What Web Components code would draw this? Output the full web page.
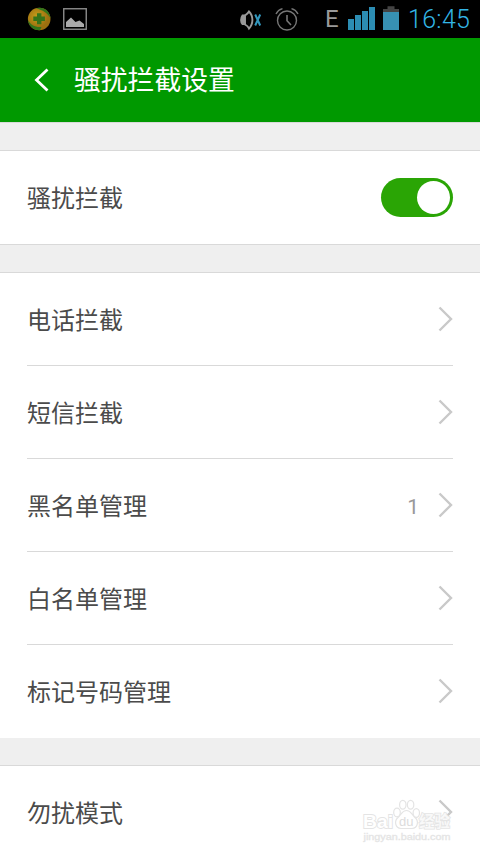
<!DOCTYPE html>
<html lang="zh-CN">
<head>
<meta charset="UTF-8">
<meta name="viewport" content="width=device-width, initial-scale=1.0">
<title>骚扰拦截设置</title>
<style>
  body {
    margin: 0;
    height: 854px;
    overflow: hidden;
    position: relative;
    background: #efefef;
    font-family: Roboto, "Noto Sans CJK SC", sans-serif;
    color: #4b4b4b;
  }
</style>
</head>
<body>
  <status-bar time="16:45" network="E"></status-bar>
  <title-bar>骚扰拦截设置</title-bar>
  <settings-group>
    <settings-row>骚扰拦截<toggle-switch slot="end"></toggle-switch></settings-row>
  </settings-group>
  <settings-group open>
    <settings-row arrow divider>电话拦截</settings-row>
    <settings-row arrow divider>短信拦截</settings-row>
    <settings-row arrow divider>黑名单管理<span slot="end">1</span></settings-row>
    <settings-row arrow divider>白名单管理</settings-row>
    <settings-row arrow>标记号码管理</settings-row>
  </settings-group>
  <settings-group open>
    <settings-row arrow>勿扰模式</settings-row>
  </settings-group>
  <page-watermark></page-watermark>

<script>
class StatusBar extends HTMLElement {
  constructor() {
    super();
    this.attachShadow({ mode: 'open' });
    this.shadowRoot.innerHTML = `
      <style>
        :host {
          display: flex;
          align-items: center;
          box-sizing: border-box;
          height: 38px;
          padding: 0 10px 0 27px;
          background: #000;
        }
        svg { display: block; flex: none; }
        .image { margin-left: 11px; }
        .mute { margin-left: auto; }
        .alarm { margin-left: 12px; }
        .network {
          margin-left: 26px;
          width: 17px;
          font-size: 24px;
          line-height: 38px;
          color: #999;
        }
        .signal { margin-left: 6px; }
        .battery { margin-left: 8px; }
        .time {
          margin-left: 9px;
          width: 62px;
          padding-top: 2px;
          font-size: 25px;
          font-weight: 300;
          line-height: 36px;
          letter-spacing: .3px;
          text-align: right;
          white-space: nowrap;
          color: #33b5e5;
        }
      </style>
      <svg width="25" height="38" viewBox="0 0 25 38">
        <defs>
          <radialGradient id="ball" cx="40%" cy="38%">
            <stop offset="0" stop-color="#c79d1a"/>
            <stop offset="1" stop-color="#9c7010"/>
          </radialGradient>
        </defs>
        <circle cx="12.2" cy="19" r="11.3" fill="url(#ball)"/>
        <path d="M9 8.300c7-2.300 14 2 14.500 10-3-5.500-7.500-8-14.500-10z" fill="#32751b"/>
        <path d="M1 20c2.500 5 7 7.500 13.500 7l-1.500 3.300C6 30.500 1.500 26 1 20z" fill="#32751b"/>
        <path d="M10 13.200h4.400v3.400h3.500V21h-3.500v3.200H10V21H6.300v-4.400H10z" fill="#367419"/>
      </svg>
      <svg class="image" width="24" height="38" viewBox="0 0 24 38">
        <rect x=".75" y="8.750" width="22.500" height="20.500" fill="none" stroke="#8c8c8c" stroke-width="1.400"/>
        <path d="M3 27v-5l5-4.500 4.500 4.500 4-1.500 4.500 3.500v3z" fill="#aaa"/>
      </svg>
      <svg class="mute" width="24" height="38" viewBox="0 0 24 38">
        <path d="M3 14.500h3.500v10.500H3Q-.8 20 3 14.500z" fill="#999"/>
        <path d="M6 15.500Q9 13.500 10 11.500q3.400 3.500 3.400 8.500T10 28.500Q9 26 6 24.500z" fill="none" stroke="#999" stroke-width="1.900"/>
        <path d="M16.200 14.500l5 11M21.200 14.500l-5 11" stroke="#3297bd" stroke-width="2"/>
      </svg>
      <svg class="alarm" width="24" height="38" viewBox="0 0 24 38" fill="none" stroke="#777" stroke-width="1.400">
        <circle cx="12" cy="20.500" r="9.500"/>
        <path d="M12 15v5.700l4 4.300" stroke-width="1.600"/>
        <path d="M1 14q2-4 6.500-5.300M23 14q-2-4-6.500-5.300"/>
      </svg>
      <span class="network">${this.getAttribute('network')}</span>
      <svg class="signal" width="27" height="38" viewBox="0 0 27 38" fill="#2c8db3">
        <path d="M0 19h6v11H0zM7 15h6v15H7zM14 11h6v19h-6zM21 7h6v23h-6z"/>
      </svg>
      <svg class="battery" width="16" height="38" viewBox="0 0 16 38">
        <path d="M0 9h4.500V6.300h7V9H16v4H0z" fill="#444"/>
        <path d="M0 12h16v18H0z" fill="#3791b3"/>
      </svg>
      <span class="time">${this.getAttribute('time')}</span>
    `;
  }
}

class TitleBar extends HTMLElement {
  constructor() {
    super();
    this.attachShadow({ mode: 'open' });
    this.shadowRoot.innerHTML = `
      <style>
        :host {
          display: flex;
          align-items: center;
          height: 84px;
          padding-left: 34px;
          background: #009900;
          border-bottom: 1px solid #d9d9d9;
          color: #fff;
          font-size: 26.800px;
        }
        svg { margin-right: 25px; }
        .title {
          padding-top: 3px;
          line-height: 81px;
        }
      </style>
      <svg width="15" height="24" viewBox="0 0 15 24">
        <path d="M13.500 1.500L2.500 12l11 10.500" fill="none" stroke="#fff" stroke-width="2.800"/>
      </svg>
      <span class="title"><slot></slot></span>
    `;
  }
}

class SettingsGroup extends HTMLElement {
  constructor() {
    super();
    this.attachShadow({ mode: 'open' });
    this.shadowRoot.innerHTML = `
      <style>
        :host {
          display: block;
          margin-top: 27px;
          background: #fff;
          border-top: 1px solid #d9d9d9;
          border-bottom: 1px solid #d9d9d9;
        }
        :host([open]) { border-bottom: 0; }
      </style>
      <slot></slot>
    `;
  }
}

class SettingsRow extends HTMLElement {
  constructor() {
    super();
    this.attachShadow({ mode: 'open' });
    this.shadowRoot.innerHTML = `
      <style>
        :host {
          display: flex;
          align-items: center;
          box-sizing: border-box;
          height: 93px;
          margin: 0 27px;
          border-bottom: 1px solid transparent;
          font-size: 24px;
        }
        :host([divider]) { border-bottom-color: #d9d9d9; }
        .label {
          flex: 1;
          padding-top: 4px;
          line-height: 88px;
        }
        ::slotted(span) {
          margin-right: 19px;
          padding-top: 3px;
          font-size: 21px;
          color: #999;
        }
        svg { display: none; }
        :host([arrow]) svg { display: block; }
      </style>
      <span class="label"><slot></slot></span>
      <slot name="end"></slot>
      <svg width="15" height="26" viewBox="0 0 15 26">
        <path d="M1.500 1.500L13 13 1.500 24.500" fill="none" stroke="#c9c9c9" stroke-width="2.400"/>
      </svg>
    `;
  }
}

class ToggleSwitch extends HTMLElement {
  constructor() {
    super();
    this.attachShadow({ mode: 'open' });
    this.shadowRoot.innerHTML = `
      <style>
        :host {
          display: flex;
          justify-content: flex-end;
          box-sizing: border-box;
          width: 72px;
          height: 39px;
          padding: 3px;
          border-radius: 20px;
          background: #2aa505;
        }
        .knob {
          width: 33px;
          height: 33px;
          border-radius: 50%;
          background: #fff;
        }
      </style>
      <span class="knob"></span>
    `;
  }
}

class PageWatermark extends HTMLElement {
  constructor() {
    super();
    this.attachShadow({ mode: 'open' });
    this.shadowRoot.innerHTML = `
      <style>
        /* floats over the last row */
        :host {
          position: absolute;
          left: 360px;
          top: 796px;
          width: 96px;
          height: 50px;
        }
        svg { display: block; }
        text { paint-order: stroke; }
      </style>
      <svg width="96" height="50" viewBox="0 0 96 50" fill="#fff" fill-opacity=".75" stroke="#e4e4e4" stroke-width="1.200">
        <text x="3" y="31.500" font-family="Liberation Sans" font-weight="700" font-size="19" stroke-width="1.800" fill-opacity="1" textLength="30" lengthAdjust="spacingAndGlyphs">Bai</text>
        <ellipse cx="37" cy="16.500" rx="3.300" ry="4.300"/>
        <ellipse cx="42.800" cy="8.800" rx="3.200" ry="4.400"/>
        <ellipse cx="50.600" cy="8.800" rx="3.200" ry="4.400"/>
        <ellipse cx="56.300" cy="17" rx="3.200" ry="4.300"/>
        <path d="M46.500 14.500c4.500 0 5 4 8.500 7 4 3.500 3 10.500-3 11H41c-6-.5-7-7.500-3-11 3.500-3 4-7 8.500-7z" fill-opacity="1"/>
        <text x="39" y="30" font-family="Liberation Sans" font-size="13" fill="#dcdcdc" fill-opacity="1" stroke="none">du</text>
        <text x="59" y="30.500" font-family="Noto Sans CJK SC" font-weight="700" font-size="15.500" stroke-width="1.600">经验</text>
        <text x="3.500" y="43.500" font-family="Liberation Sans" font-size="9.500" fill="#e4e4e4" stroke="#e4e4e4" stroke-width=".3" fill-opacity="1" textLength="87" lengthAdjust="spacingAndGlyphs">jingyan.baidu.com</text>
      </svg>
    `;
  }
}

customElements.define('status-bar', StatusBar);
customElements.define('title-bar', TitleBar);
customElements.define('settings-group', SettingsGroup);
customElements.define('settings-row', SettingsRow);
customElements.define('toggle-switch', ToggleSwitch);
customElements.define('page-watermark', PageWatermark);
</script>
</body>
</html>
